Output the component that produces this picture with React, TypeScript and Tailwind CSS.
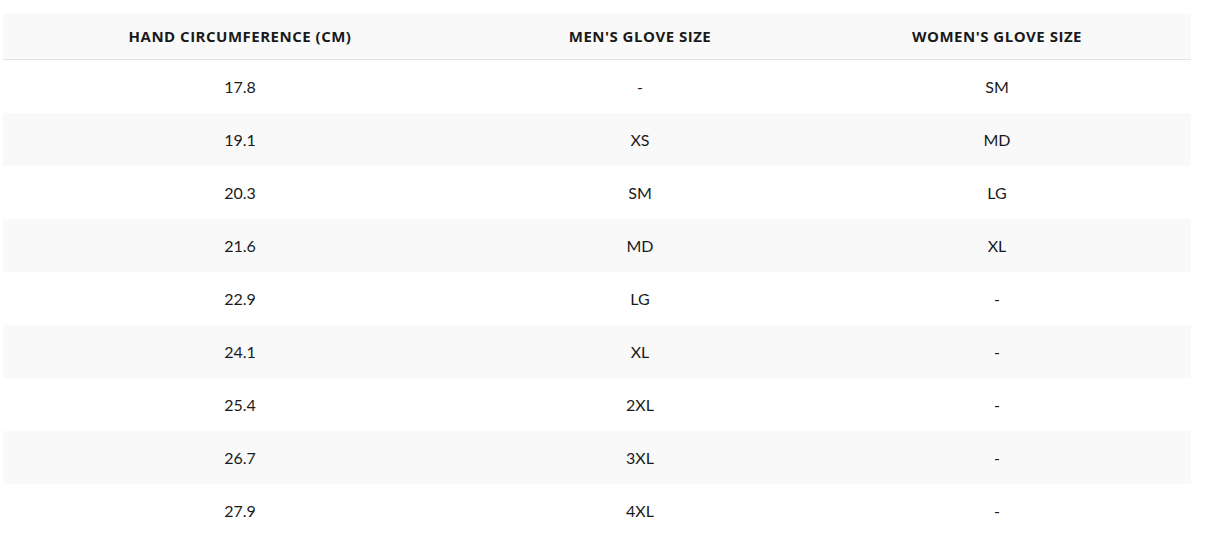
import React from 'react';

const rows: [string, string, string][] = [
  ['17.8', '-', 'SM'],
  ['19.1', 'XS', 'MD'],
  ['20.3', 'SM', 'LG'],
  ['21.6', 'MD', 'XL'],
  ['22.9', 'LG', '-'],
  ['24.1', 'XL', '-'],
  ['25.4', '2XL', '-'],
  ['26.7', '3XL', '-'],
  ['27.9', '4XL', '-'],
];

const th = "h-[46px] border-b border-[#e3e3e3] text-[15px] tracking-[0.5px] font-bold uppercase text-center font-['Open_Sans',sans-serif]";

export default function App() {
  return (
    <div className="w-[1223px] h-[537px] bg-white pt-[14px] pl-[3px] font-['Lato',sans-serif] text-[#1a1a1a] overflow-hidden">
      <table className="w-[1188px] border-separate border-spacing-0 table-fixed">
        <colgroup>
          <col className="w-[474px]" />
          <col className="w-[326px]" />
          <col className="w-[388px]" />
        </colgroup>
        <thead>
          <tr className="bg-[#f9f9f9]">
            <th className={th}>Hand Circumference (cm)</th>
            <th className={th}>Men's Glove Size</th>
            <th className={th}>Women's Glove Size</th>
          </tr>
        </thead>
        <tbody>
          {rows.map((r, i) => (
            <tr key={r[0]} className={`h-[53px] ${i % 2 === 1 ? 'bg-[#f9f9f9]' : 'bg-white'}`}>
              <td className="text-[16px] text-center">{r[0]}</td>
              <td className="text-[16px] text-center">{r[1]}</td>
              <td className="text-[16px] text-center">{r[2]}</td>
            </tr>
          ))}
        </tbody>
      </table>
    </div>
  );
}
